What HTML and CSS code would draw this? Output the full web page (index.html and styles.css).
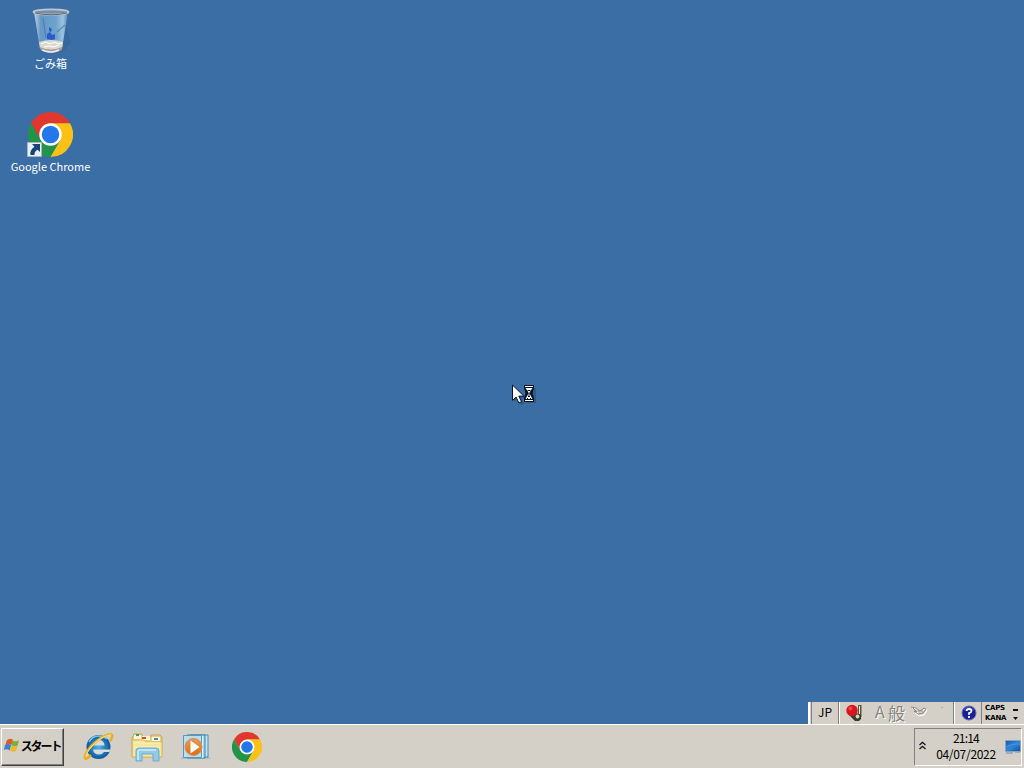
FILE: index.html
```html
<!DOCTYPE html>
<html lang="ja">
<head>
    <meta charset="UTF-8">
    <title>Desktop</title>
    <link rel="stylesheet" href="styles.css">
</head>
<body>
    <svg class="defs" width="0" height="0">
        <symbol id="chrome" viewBox="0 0 48 48">
            <path fill="#e0382e" d="M24 12H44.8A24 24 0 0 0 3.2 12L13.6 30Z"/>
            <path fill="#229447" d="M3.2 12A24 24 0 0 0 24 48L34.4 30 24 34 13.6 30Z"/>
            <path fill="#fbc116" d="M44.8 12A24 24 0 0 1 24 48L34.4 30 32 20 24 12Z"/>
            <circle cx="24" cy="24" r="12" fill="#fff"/>
            <circle cx="24" cy="24" r="9.3" fill="#2477e8"/>
        </symbol>
        <linearGradient id="glass">
            <stop offset="0" stop-color="#b8d4e8"/>
            <stop offset=".2" stop-color="#6598c5"/>
            <stop offset=".65" stop-color="#6fa2cd"/>
            <stop offset=".85" stop-color="#9cc3df"/>
            <stop offset="1" stop-color="#5485b2"/>
        </linearGradient>
        <linearGradient id="orange" x2="0" y2="1">
            <stop offset="0" stop-color="#e99a54"/>
            <stop offset="1" stop-color="#e06c10"/>
        </linearGradient>
        <radialGradient id="ieBlue">
            <stop offset="0" stop-color="#4bb7e9"/>
            <stop offset="1" stop-color="#0d559a"/>
        </radialGradient>
        <linearGradient id="screen" x2="1" y2="1">
            <stop offset="0" stop-color="#1b56a8"/>
            <stop offset=".5" stop-color="#2f86d6"/>
            <stop offset="1" stop-color="#174b98"/>
        </linearGradient>
    </svg>

    <main class="desktop">
        <div class="shortcut">
            <svg class="bin" width="48" height="48" viewBox="0 0 48 48">
                <path d="M37 12L44 36 35 45 14 46Z" fill="#234c79" opacity=".2"/>
                <path d="M7 5L13 42Q24 49 35 42L41 5Z" fill="url(#glass)"/>
                <path d="M12 35Q24 31 36 35L35 41Q24 45 13 41Z" fill="#d9d9cf"/>
                <path d="M14 37l5-2 4 2 5-2 3 2 4-1M17 40l5-1 4 1 6-2" fill="none" stroke="#fff"/>
                <path d="M13 40Q24 45 35 40V43Q24 49 14 43Z" fill="#a99d98"/>
                <path d="M15 43Q24 47 32 43" fill="none" stroke="#eee" stroke-width="1.5"/>
                <path d="M22 20l3 2-1 3-2-1ZM20 27l3-2 2 3 3-1v5l-3 1-5-1Z" fill="#1c50c8" opacity=".85"/>
                <path d="M30 25l8-7M16 11l3 20" stroke="#376c9e" stroke-width="1.2" opacity=".6"/>
                <ellipse cx="24" cy="5" rx="17.5" ry="2.6" fill="#6e91b2" stroke="#c5c6c9" stroke-width="1.8"/>
                <path d="M8 6Q24 9.500 40 6" fill="none" stroke="#66656d"/>
            </svg>
            <span class="shortcut-label">ごみ箱</span>
        </div>
        <div class="shortcut">
            <div class="shortcut-icon">
                <svg width="45" height="45"><use href="#chrome"/></svg>
                <svg class="link-arrow" width="15" height="15" viewBox="0 0 15 15">
                    <path d="M.5.5h14v14H.5z" fill="#e8eff8" stroke="#a9b4c0"/>
                    <path d="M5 2h8v8l-2.400-2.300Q7 9.500 7.500 13H3.500Q2.500 8 7.500 4.800Z" fill="#174579"/>
                </svg>
            </div>
            <span class="shortcut-label">Google Chrome</span>
        </div>
    </main>

    <svg class="cursor" width="28" height="24" viewBox="0 0 28 24">
        <path d="M3 3v15l4-3 3 6 3-1-2-6h5ZM15 4h10v15H15Z" fill="#183f69" opacity=".4"/>
        <path d="M1.500 1v15.400l3.600-3.400 2.800 6 2.600-1.200-2.700-5.700h5Z" fill="#fff" stroke="#081426"/>
        <path d="M13 1h10v3l-1.500 5.500L23 14v4H13v-4l1.500-4.500L13 4Z" fill="#081426"/>
        <path d="M14 2.500h8M14 16.500h8" stroke="#fff"/>
        <path d="M14.500 4h7l-3 4.500v1l3 5.500h-7l3-5.500v-1Z" fill="#fff"/>
        <path d="M16.500 6.500h3M18 9v3M16 14.500h1M19 14.500h1M17 12.500h2" stroke="#081426"/>
    </svg>

    <div class="language-bar">
        <span class="grip"></span>
        <span class="lang">JP</span>
        <div class="ime">
            <svg width="20" height="20" viewBox="0 0 20 20">
                <path d="M13 2h3.500v12H13Z" fill="#55563f"/>
                <path d="M14.500 3v8" stroke="#eeeac8"/>
                <path d="M3 11l5 2 3-3 5 2v4l-2 2h-4l-3-3Z" fill="#353c2d"/>
                <circle cx="7" cy="7.500" r="5.700" fill="#d91620"/>
                <circle cx="5.500" cy="5.500" r="2" fill="#ee464b"/>
                <circle cx="12.500" cy="13.500" r="1.900" fill="#d6d5be"/>
            </svg>
            <span class="mode-a">A</span>
            <span class="mode-kanji">般</span>
            <svg class="pad" width="36" height="18" viewBox="0 0 36 18">
                <path d="M1 3l5 1 4 3 4-3 2 1-3 5-5 1-4-3 3 1M3 4l4 4" fill="none" stroke="#fff" transform="translate(1 1)"/>
                <path d="M1 3l5 1 4 3 4-3 2 1-3 4-5 1-4-3 3 1M3 4l4 4M8 7h5" fill="none" stroke="#8b8880"/>
                <path d="M31 4l2-1" stroke="#aaa69f"/>
            </svg>
        </div>
        <div class="help">
            <svg width="16" height="16" viewBox="0 0 16 16">
                <circle cx="8" cy="8" r="7" fill="#17209b" stroke="#626aa9"/>
                <path d="M3 5Q7 0 13 5" fill="none" stroke="#747de0" opacity=".6"/>
                <path d="M5.500 6Q5.500 4 8 4t2.500 2Q10.500 7.300 8 8.200V9.800M8 11v2" fill="none" stroke="#fff" stroke-width="1.800"/>
            </svg>
        </div>
        <div class="keys"><span>CAPS</span><span>KANA</span></div>
        <svg class="bar-options" width="8" height="18" viewBox="0 0 8 18">
            <path d="M1 5h5v2H1zM1 13h5l-2.500 3Z" fill="#111"/>
        </svg>
    </div>

    <footer class="taskbar">
        <button class="start">
            <svg width="16" height="17" viewBox="0 0 17 17">
                <path d="M3 3q3-3 6.500-.6L8 8Q5 6 1.500 8Z" fill="#dc5a30"/>
                <path d="M9 3q3 2 7 0L14.500 8.500q-3.500 2-6.500-.2Z" fill="#7fac3e"/>
                <path d="M1 8q3.500-2 6.500 0L6 13.700Q3 11.500 0 13.300Z" fill="#3b80ca"/>
                <path d="M7.700 8.500q3 2 6.800 0L13 14.200q-3 2-6.500-.2Z" fill="#efb92c"/>
            </svg>
            <span>スタート</span>
        </button>
        <div class="pinned">
            <svg width="32" height="32" viewBox="0 0 32 32">
                <circle cx="16.500" cy="16" r="12" fill="url(#ieBlue)"/>
                <path d="M11 14.500Q12 9 17 9q5 0 5.500 5.500ZM11 18.500H28.300L27.500 21H22q-2 2.500-5 2.500-5.200 0-6-5Z" fill="#d8dbd8"/>
                <path d="M7 11Q10 5 17 5q5 0 8 3" fill="none" stroke="#78cbed" stroke-width="1.500"/>
                <path d="M9 24Q4 29 3 27c-1-3 4-11 12-17 7-6 14-8 15-6 .7 1.500-.5 4-2 6" fill="none" stroke="#e8ae24" stroke-width="2.600"/>
                <path d="M4 26C4 21 11 13 17 9c5-4 10-5 12-5" fill="none" stroke="#ffe690"/>
            </svg>
            <svg width="32" height="32" viewBox="0 0 32 32">
                <path d="M2 6l1-3h8l1 3h8V4h9l2 2v20H1V6Z" fill="#e9cf78" stroke="#c4a860"/>
                <path d="M3 4h7v4H3zM11 5h8v4h-8zM21 6h8v4h-8z" fill="#fff8d4"/>
                <path d="M5 4h3" stroke="#35a348" stroke-width="2"/>
                <path d="M11 7h4" stroke="#d34d35" stroke-width="2"/>
                <path d="M23 8h4" stroke="#4389c1" stroke-width="2"/>
                <path d="M1.500 9H13l2 2h16v15H1.500Z" fill="#f7e69e" stroke="#d7bd68"/>
                <path d="M3 12h26M3 16h26" stroke="#fff3bd"/>
                <path d="M5 30V20q0-3 3-3h17q3 0 3 3v10h-6v-7H11v7Z" fill="#91c9e8" stroke="#6baad0"/>
                <path d="M7 29V20q0-1 2-1h16" fill="none" stroke="#d1edfa" stroke-width="1.500"/>
            </svg>
            <svg width="32" height="32" viewBox="0 0 32 32">
                <path d="M0 28h31l-4-4H4Z" fill="#a9c1cf"/>
                <path d="M10 4h18v22H10Z" fill="#c4e6f4" stroke="#488cac"/>
                <path d="M7 4h18v23H7Z" fill="#9ed4ef" stroke="#3b83aa"/>
                <path d="M3.500 4.500h18v22h-18Z" fill="#b9def0" stroke="#5697bb"/>
                <path d="M22.500 5v22" stroke="#e0f5ff"/>
                <circle cx="13.500" cy="16" r="8.500" fill="url(#orange)" stroke="#db8e51"/>
                <path d="M10.500 9.500v13l9-6.500Z" fill="#fff"/>
            </svg>
            <svg class="chrome-pin" width="30" height="30"><use href="#chrome"/></svg>
        </div>
        <div class="tray">
            <svg class="chevrons" width="8" height="10" viewBox="0 0 8 10">
                <path d="M.5 4l3-2.700L6.500 4M.5 8l3-2.700L6.500 8" fill="none" stroke="#111" stroke-width="1.300"/>
            </svg>
            <div class="clock">
                <span class="time">21:14</span>
                <span class="date">04/07/2022</span>
            </div>
            <svg class="monitor" width="16" height="16" viewBox="0 0 16 16">
                <path d="M.5 1.500h15v11H.5Z" fill="url(#screen)" stroke="#83a5c5"/>
                <path d="M1 8q6-4 14-3" fill="none" stroke="#4b9be0"/>
                <path d="M1 13h7v2H1zM10 13h5v1h-5z" fill="#97b0c5"/>
            </svg>
        </div>
    </footer>
</body>
</html>
```
FILE: styles.css
```css
:root {
    --desktop: #3a6ea5;
    --face: #d4d0c8;
    --shadow: #808080;
}

* {
    box-sizing: border-box;
}

body {
    margin: 0;
    height: 100vh;
    overflow: hidden;
    display: flex;
    flex-direction: column;
    background: var(--desktop);
    color: #000;
    font-family: "Noto Sans CJK JP", "Liberation Sans", sans-serif;
}

svg {
    display: block;
    flex-shrink: 0;
}

.defs {
    position: absolute;
}

.desktop {
    flex: 1;
    display: flex;
    flex-direction: column;
    align-items: flex-start;
    padding: 7px 0 0 1px;
}

.shortcut {
    width: 99px;
    height: 105px;
    display: flex;
    flex-direction: column;
    align-items: center;
    color: #fff;
}

.shortcut-icon {
    position: relative;
}

.link-arrow {
    position: absolute;
    left: -1px;
    bottom: 0;
}

.shortcut-label {
    font-size: 11px;
    line-height: 14px;
    white-space: nowrap;
    margin-top: 2px;
}

.bin + .shortcut-label {
    margin-top: 1px;
}

.cursor {
    position: absolute;
    left: 511px;
    top: 384px;
}

.language-bar {
    align-self: flex-end;
    width: 216px;
    height: 22px;
    display: flex;
    align-items: center;
    background: var(--face);
}

.grip {
    width: 4px;
    height: 22px;
    border-left: 2px solid #fff;
    border-right: 1px solid var(--shadow);
}

.lang {
    width: 27px;
    height: 22px;
    padding-left: 6px;
    font-size: 12px;
    line-height: 20px;
    border-right: 1px solid var(--shadow);
}

.ime {
    width: 115px;
    height: 22px;
    display: flex;
    align-items: center;
    padding-left: 5px;
    border-left: 1px solid #fff;
    border-right: 1px solid var(--shadow);
}

.mode-a,
.mode-kanji {
    color: #858279;
    text-shadow: 1px 1px #fff;
    font-size: 17px;
    line-height: 20px;
}

.mode-a {
    width: 14px;
    margin-left: 9px;
    font-family: "Liberation Mono", monospace;
    font-size: 19px;
    transform: scaleX(0.85);
}

.mode-kanji {
    width: 22px;
}

.help {
    width: 28px;
    height: 22px;
    padding: 3px 0 0 6px;
    border-left: 1px solid #fff;
    border-right: 1px solid var(--shadow);
}

.keys {
    width: 28px;
    display: flex;
    flex-direction: column;
    padding-left: 3px;
    font-family: "DejaVu Sans", sans-serif;
    font-size: 7px;
    font-weight: bold;
    line-height: 10px;
    letter-spacing: -0.2px;
}

.bar-options {
    margin-left: 2px;
}

.taskbar {
    height: 44px;
    display: flex;
    align-items: center;
    background: var(--face);
    border-top: 1px solid #fff;
    padding: 2px 2px 1px 1px;
}

.start {
    width: 63px;
    height: 38px;
    display: flex;
    align-items: center;
    padding: 0 0 3px 2px;
    background: var(--face);
    color: #000;
    font-family: inherit;
    font-size: 12px;
    font-weight: bold;
    border: 1px solid;
    border-color: #fff #404040 #404040 #fff;
    box-shadow: inset -1px -1px var(--shadow);
}

.start span {
    width: 41px;
    letter-spacing: -2.1px;
    white-space: nowrap;
}

.pinned {
    flex: 1;
    display: flex;
    align-items: center;
    gap: 17px;
    padding-left: 18px;
}

.chrome-pin {
    margin-left: 3px;
}

.tray {
    width: 108px;
    height: 38px;
    display: flex;
    align-items: center;
    border: 1px solid;
    border-color: var(--shadow) #fff #fff var(--shadow);
    padding-left: 4px;
}

.chevrons {
    margin-bottom: 2px;
}

.clock {
    width: 78px;
    display: flex;
    flex-direction: column;
    align-items: center;
    margin-bottom: 2px;
    font-size: 12px;
    line-height: 16px;
}

.time {
    letter-spacing: -0.8px;
}

.date {
    letter-spacing: -0.3px;
}
```
